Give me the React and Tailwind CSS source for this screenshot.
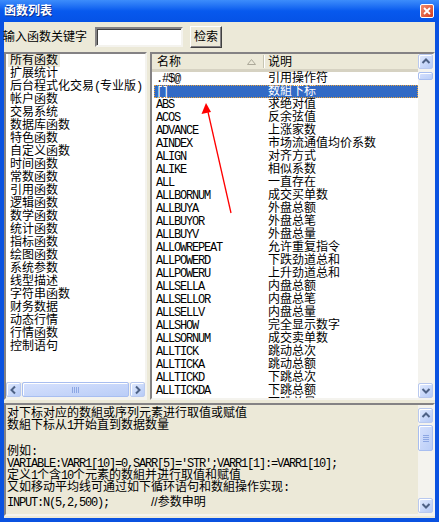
import React from 'react';

const categories = [
  '所有函数', '扩展统计', '后台程式化交易(专业版)', '帐户函数', '交易系统', '数据库函数',
  '特色函数', '自定义函数', '时间函数', '常数函数', '引用函数', '逻辑函数', '数学函数',
  '统计函数', '指标函数', '绘图函数', '系统参数', '线型描述', '字符串函数', '财务数据',
  '动态行情', '行情函数', '控制语句'
];

const funcs = [
  ['.#$@', '引用操作符'], ['[]', '数組下标'], ['ABS', '求绝对值'], ['ACOS', '反余弦值'],
  ['ADVANCE', '上涨家数'], ['AINDEX', '市场流通值均价系数'], ['ALIGN', '对齐方式'],
  ['ALIKE', '相似系数'], ['ALL', '一直存在'], ['ALLBORNUM', '成交买单数'], ['ALLBUYA', '外盘总额'],
  ['ALLBUYOR', '外盘总笔'], ['ALLBUYV', '外盘总量'], ['ALLOWREPEAT', '允许重复指令'],
  ['ALLPOWERD', '下跌劲道总和'], ['ALLPOWERU', '上升劲道总和'], ['ALLSELLA', '内盘总额'],
  ['ALLSELLOR', '内盘总笔'], ['ALLSELLV', '内盘总量'], ['ALLSHOW', '完全显示数字'],
  ['ALLSORNUM', '成交卖单数'], ['ALLTICK', '跳动总次'], ['ALLTICKA', '跳动总额'],
  ['ALLTICKD', '下跳总次'], ['ALLTICKDA', '下跳总额'], ['ALLTICKDV', '下跳总量']
];

// ascii runs use a narrow mono face like the bitmap font in the shot
function A({ children }) {
  return <span className="font-['Liberation_Mono',monospace] tracking-[-1.2px]">{children}</span>;
}

function Chevron({ dir }) {
  const d = {
    up: 'M1.5 6 L5 2.5 L8.5 6',
    down: 'M1.5 3 L5 6.5 L8.5 3',
    left: 'M6 1.5 L2.5 5 L6 8.5',
    right: 'M3 1.5 L6.5 5 L3 8.5'
  }[dir];
  return (
    <svg width="10" height="10" viewBox="0 0 10 10">
      <path d={d} fill="none" stroke="#4D6185" strokeWidth="2" />
    </svg>
  );
}

function SBtn({ dir }) {
  return (
    <div className="w-[15px] h-[15px] shrink-0 rounded-[2px] border border-[#B9C9EF] bg-gradient-to-br from-[#E1EAFE] to-[#B6CAF6] shadow-[inset_1px_1px_0_#fff] flex items-center justify-center">
      <Chevron dir={dir} />
    </div>
  );
}

function Grip({ vertical }) {
  return (
    <div className={vertical ? 'flex flex-col gap-[1px]' : 'flex gap-[1px]'}>
      {[0, 1, 2, 3].map((i) => (
        <div key={i} className={vertical ? 'w-[6px] h-[1px] bg-[#8DA7E3]' : 'w-[1px] h-[6px] bg-[#8DA7E3]'} />
      ))}
    </div>
  );
}

function Thumb({ className, grip, vertical }) {
  return (
    <div className={`rounded-[2px] border border-[#A8BEF0] bg-gradient-to-br from-[#D6E1FD] to-[#BACDF7] shadow-[inset_1px_1px_0_#fff] flex items-center justify-center ${className}`}>
      {grip && <Grip vertical={vertical} />}
    </div>
  );
}

export default function App() {
  return (
    <div className="relative w-[439px] h-[522px] bg-[#0A52E0] flex flex-col font-['Liberation_Sans','Noto_Sans_CJK_SC',sans-serif] text-[12px] text-black overflow-hidden">
      {/* title bar */}
      <div className="h-[22px] shrink-0 bg-gradient-to-b from-[#3D8DFB] via-[#0759EE] to-[#0552E6] flex items-center justify-between pl-[4px] pr-[5px]">
        <span className="text-white font-bold text-[12px] leading-none [text-shadow:1px_1px_0_#0B2F8C]">函数列表</span>
        <div className="w-[14px] h-[14px] rounded-[2px] border border-white bg-gradient-to-br from-[#F08A6C] to-[#D3381B] flex items-center justify-center">
          <svg width="8" height="8" viewBox="0 0 8 8">
            <path d="M1 1 L7 7 M7 1 L1 7" stroke="#fff" strokeWidth="1.8" />
          </svg>
        </div>
      </div>

      <div className="flex-1 ml-[4px] mr-[4px] mb-[4px] bg-[#ECE9D8] flex flex-col">
        {/* search row */}
        <div className="h-[30px] shrink-0 flex items-center">
          <span className="ml-[-1px] leading-none">输入函数关键字</span>
          <div className="ml-[8px] w-[88px] h-[20px] bg-white border-2 border-t-[#848284] border-l-[#848284] border-b-[#F4F3EE] border-r-[#F4F3EE] shadow-[inset_1px_1px_0_#404040]" />
          <div className="ml-[7px] w-[32px] h-[22px] bg-[#ECE9D8] border border-t-white border-l-white border-b-[#404040] border-r-[#404040] shadow-[inset_-1px_-1px_0_#848284] flex items-center justify-center leading-none">
            检索
          </div>
        </div>

        {/* lists */}
        <div className="h-[348px] shrink-0 flex gap-[3px]">
          {/* category list */}
          <div className="w-[143px] h-full bg-white border-2 border-t-[#848284] border-l-[#848284] border-b-[#F4F3EE] border-r-[#F4F3EE] flex flex-col">
            <div className="flex-1 overflow-hidden whitespace-nowrap">
              {categories.map((c, i) => (
                <div key={c} className="h-[13px] flex items-center pl-[2px]">
                  <span className={`px-[2px] leading-[13px] ${i === 0 ? 'bg-[#ECE9D8]' : ''}`}>
                    {c.includes('(') ? (
                      <>后台程式化交易<A>(</A>专业版<A>)</A></>
                    ) : c}
                  </span>
                </div>
              ))}
            </div>
            <div className="h-[16px] shrink-0 bg-[#F4F3EE] flex items-center gap-[1px] pb-[1px]">
              <SBtn dir="left" />
              <Thumb className="flex-1 h-[15px]" grip />
              <SBtn dir="right" />
            </div>
          </div>

          {/* function list */}
          <div className="flex-1 h-full bg-white border-2 border-t-[#848284] border-l-[#848284] border-b-[#F4F3EE] border-r-[#F4F3EE] flex">
            <div className="flex-1 flex flex-col overflow-hidden">
              <div className="h-[18px] shrink-0 bg-[#ECE9D8] border-b-[3px] border-[#D6D2C2] flex items-center">
                <div className="w-[111px] h-full flex items-center justify-between pl-[5px] pr-[7px]">
                  <span className="leading-none">名称</span>
                  <svg width="9" height="6" viewBox="0 0 9 6">
                    <path d="M0.5 5.5 L4.5 0.5 L8.5 5.5 Z" fill="none" stroke="#ACA899" />
                  </svg>
                </div>
                <div className="w-[1px] h-[13px] bg-[#C7C5B2]" />
                <div className="w-[1px] h-[13px] bg-white" />
                <span className="pl-[3px] leading-none">说明</span>
              </div>
              <div className="flex-1 whitespace-nowrap">
                {funcs.map(([n, d], i) => (
                  <div
                    key={n}
                    className={`h-[13px] ml-[2px] flex items-center leading-[13px] ${
                      i === 1 ? 'bg-[#316AC5] text-white outline-1 outline-dotted outline-[#E8A33C] -outline-offset-1' : ''
                    }`}
                  >
                    <div className="w-[112px] pl-[2px]"><A>{n}</A></div>
                    <div className="pl-[2px]">{d}</div>
                  </div>
                ))}
              </div>
            </div>
            <div className="w-[15px] shrink-0 bg-[#F4F3EE] flex flex-col">
              <SBtn dir="up" />
              <Thumb className="mt-[3px] h-[8px]" />
              <div className="flex-1" />
              <SBtn dir="down" />
            </div>
          </div>
        </div>

        {/* description */}
        <div className="mt-[3px] h-[113px] shrink-0 bg-[#ECE9D8] border-2 border-t-[#848284] border-l-[#848284] border-b-[#F4F3EE] border-r-[#F4F3EE] flex">
          <div className="flex-1 pl-[1px] pt-[2px] whitespace-pre leading-[12px]">
            <div className="h-[12px]">对下标对应的数組或序列元素进行取值或赋值</div>
            <div className="h-[12px]">数組下标从<A>1</A>开始直到数据数量</div>
            <div className="h-[12px]" />
            <div className="h-[12px] mt-[2px]">例如<A>:</A></div>
            <div className="h-[12px]"><A>VARIABLE:VARR1[10]=0,SARR[5]='STR';VARR1[1]:=VARR1[10];</A></div>
            <div className="h-[12px]">定义<A>1</A>个含<A>10</A>个元素的数組并进行取值和赋值</div>
            <div className="h-[12px]">又如移动平均线可通过如下循环语句和数組操作实现<A>:</A></div>
            <div className="h-[12px] mt-[3px]"><A>{'INPUT:N(5,2,500);       '}</A>//参数申明</div>
          </div>
          <div className="w-[15px] shrink-0 bg-[#F4F3EE] flex flex-col pt-[3px] pb-[1px]">
            <SBtn dir="up" />
            <Thumb className="mt-[2px] h-[26px]" grip vertical />
            <div className="flex-1" />
            <SBtn dir="down" />
          </div>
        </div>
      </div>

      {/* red annotation arrow */}
      <svg className="absolute left-0 top-0 pointer-events-none" width="439" height="522">
        <line x1="231" y1="213" x2="208" y2="112" stroke="#FF0000" strokeWidth="1.3" />
        <path d="M206 103 L201.5 114 L211 112 Z" fill="#FF0000" />
      </svg>
    </div>
  );
}
